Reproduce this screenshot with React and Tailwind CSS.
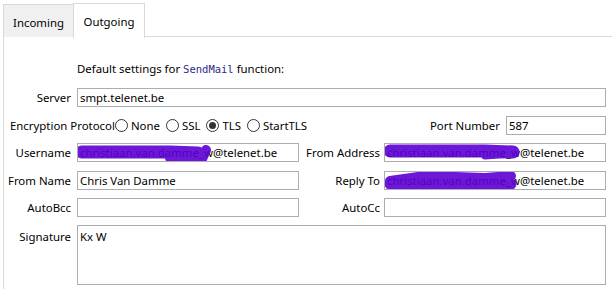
import React from "react";

const Field = ({ value = "", className = "", children }) => (
  <div
    className={`relative h-[19px] border border-[#abadb3] bg-white pl-[2px] leading-[17px] whitespace-nowrap overflow-hidden ${className}`}
  >
    {value}
    {children}
  </div>
);

const Radio = ({ label, checked }) => (
  <div className="flex items-center mr-[6px]">
    <span className="flex h-[13px] w-[13px] items-center justify-center rounded-full border border-[#333] bg-white">
      {checked && <span className="h-[7px] w-[7px] rounded-full bg-[#333]" />}
    </span>
    <span className="ml-[3px]">{label}</span>
  </div>
);

// purple marker over the email address
const Scribble = ({ variant }) => {
  const color = "#5e00d4";
  return (
    <svg
      className="pointer-events-none absolute left-0 top-0 opacity-[0.9]"
      width="160"
      height="30"
      viewBox="0 0 160 30"
      style={{ overflow: "visible" }}
    >
      {variant === "user" && (
        <g stroke={color} strokeLinecap="round" strokeLinejoin="round" fill="none">
          <path d="M4 8 L92 8 L120 9" strokeWidth="13" />
          <path d="M92 14 Q110 24 124 15 L128 6" strokeWidth="10" />
        </g>
      )}
      {variant === "from" && (
        <g stroke={color} strokeLinecap="round" strokeLinejoin="round" fill="none">
          <path d="M5 7 L100 7 L128 8" strokeWidth="13" />
          <path d="M100 12 L130 10" strokeWidth="7" />
        </g>
      )}
      {variant === "reply" && (
        <g stroke={color} strokeLinecap="round" strokeLinejoin="round" fill="none">
          <path d="M5 9 L40 4 L100 6 L126 4" strokeWidth="10" />
          <path d="M5 12 L126 12" strokeWidth="11" />
        </g>
      )}
    </svg>
  );
};

export default function App() {
  const email = "christiaan.van.damme_w@telenet.be";
  return (
    <div className="w-[612px] h-[289px] overflow-hidden bg-white text-[11.4px] text-black font-['Noto_Sans','Open_Sans',sans-serif]">
      {/* Tabs */}
      <div className="flex h-[37px] items-end pl-[3px]">
        <div className="flex h-[33px] w-[70px] items-center justify-center border-l border-t border-[#d9d9d9] bg-[#f0f0f0] pt-[3px]">
          Incoming
        </div>
        <div className="relative z-10 -mb-px flex h-[35px] w-[72px] items-center justify-center border-x border-t border-[#d9d9d9] bg-white pt-[2px]">
          Outgoing
        </div>
        <div className="flex-1 border-b border-[#d9d9d9]" />
      </div>

      {/* Panel */}
      <div className="ml-[3px] h-[252px] border-l border-[#d9d9d9] pr-[6px]">
        <div className="pl-[73px] pt-[24px] leading-[16px]">
          Default settings for{" "}
          <span className="font-['DejaVu_Sans_Mono','Liberation_Mono',monospace] text-[10.5px] text-[#2b2b8c]">
            SendMail
          </span>{" "}
          function:
        </div>

        {/* Server */}
        <div className="mt-[11px] flex items-center">
          <div className="w-[67px] text-right">Server</div>
          <Field value="smpt.telenet.be" className="ml-[6px] flex-1" />
        </div>

        {/* Encryption */}
        <div className="mt-[9px] flex items-center">
          <div className="pl-[6px]">Encryption Protocol</div>
          <div className="flex items-center">
            <Radio label="None" />
            <Radio label="SSL" />
            <Radio label="TLS" checked />
            <Radio label="StartTLS" />
          </div>
          <div className="flex-1 text-right">Port Number</div>
          <Field value="587" className="ml-[6px] w-[100px]" />
        </div>

        {/* Username / From Address */}
        <div className="mt-[8px] flex items-center">
          <div className="w-[67px] text-right">Username</div>
          <Field value={email} className="ml-[6px] w-[222px]">
            <Scribble variant="user" />
          </Field>
          <div className="flex-1 text-right">From Address</div>
          <Field value={email} className="ml-[4px] w-[222px]">
            <Scribble variant="from" />
          </Field>
        </div>

        {/* From Name / Reply To */}
        <div className="mt-[9px] flex items-center">
          <div className="w-[67px] text-right">From Name</div>
          <Field value="Chris Van Damme" className="ml-[6px] w-[222px]" />
          <div className="flex-1 text-right">Reply To</div>
          <Field value={email} className="ml-[4px] w-[222px]">
            <Scribble variant="reply" />
          </Field>
        </div>

        {/* AutoBcc / AutoCc */}
        <div className="mt-[8px] flex items-center">
          <div className="w-[67px] text-right">AutoBcc</div>
          <Field className="ml-[6px] w-[222px]" />
          <div className="flex-1 text-right">AutoCc</div>
          <Field className="ml-[4px] w-[222px]" />
        </div>

        {/* Signature */}
        <div className="mt-[8px] flex items-start">
          <div className="w-[67px] pt-[3px] text-right">Signature</div>
          <div className="ml-[6px] h-[60px] flex-1 border border-[#abadb3] pl-[2px] pt-[3px] leading-[15px]">
            Kx W
          </div>
        </div>
      </div>
    </div>
  );
}
